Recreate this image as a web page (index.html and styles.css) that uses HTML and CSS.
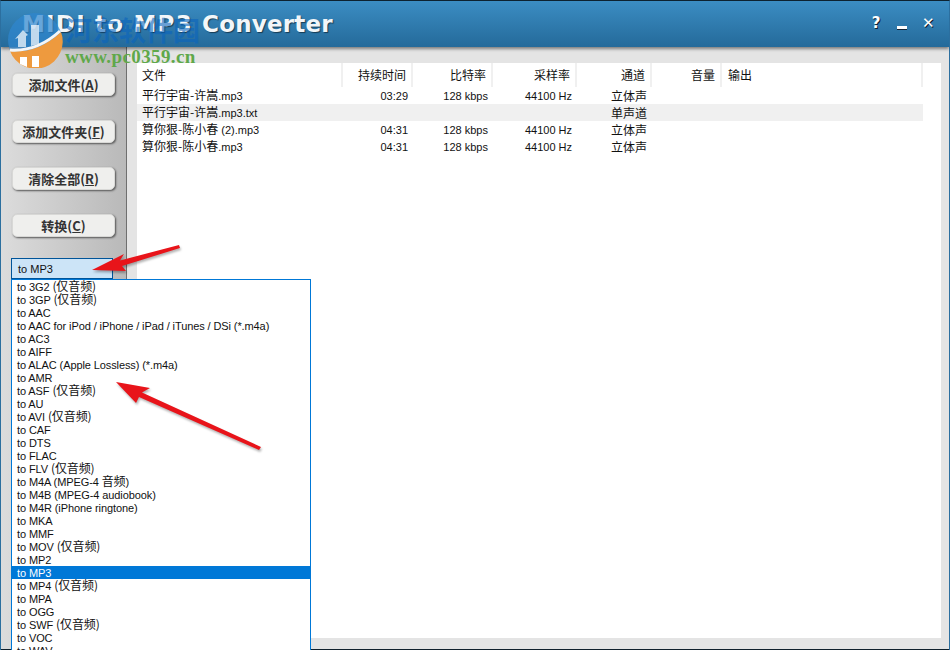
FILE: index.html
```html
<!DOCTYPE html>
<html lang="zh">
<head>
    <meta charset="UTF-8">
    <meta name="viewport" content="width=device-width, initial-scale=1.0">
    <title>MIDI to MP3 Converter</title>
    <link rel="stylesheet" href="styles.css">
</head>
<body>
    <div class="window">
        <!-- 标题栏 -->
        <div class="titlebar">
            <h1 class="app-title">MIDI to MP3 <span class="title-end">Converter</span></h1>
            <div class="win-buttons">
                <span class="win-btn">?</span>
                <span class="win-min"></span>
                <span class="win-btn">✕</span>
            </div>
        </div>

        <div class="content">
            <!-- 左侧按钮 -->
            <div class="sidebar">
                <button class="side-btn">添加文件(<u>A</u>)</button>
                <button class="side-btn">添加文件夹(<u>F</u>)</button>
                <button class="side-btn">清除全部(<u>R</u>)</button>
                <button class="side-btn">转换(<u>C</u>)</button>
            </div>

            <!-- 文件列表 -->
            <div class="main">
                <table class="file-table">
                    <thead>
                        <tr>
                            <th class="col-file cn">文件</th>
                            <th class="col-time num cn">持续时间</th>
                            <th class="col-rate num cn">比特率</th>
                            <th class="col-sample num cn">采样率</th>
                            <th class="col-channel num cn">通道</th>
                            <th class="col-volume num cn">音量</th>
                            <th class="col-output cn">输出</th>
                        </tr>
                    </thead>
                    <tbody>
                        <tr>
                            <td><span class="cn">平行宇宙-许嵩</span>.mp3</td>
                            <td class="num">03:29</td>
                            <td class="num">128 kbps</td>
                            <td class="num">44100 Hz</td>
                            <td class="num cn">立体声</td>
                            <td></td>
                            <td></td>
                        </tr>
                        <tr class="alt">
                            <td><span class="cn">平行宇宙-许嵩</span>.mp3.txt</td>
                            <td></td>
                            <td></td>
                            <td></td>
                            <td class="num cn">单声道</td>
                            <td></td>
                            <td></td>
                        </tr>
                        <tr>
                            <td><span class="cn">算你狠-陈小春</span> (2).mp3</td>
                            <td class="num">04:31</td>
                            <td class="num">128 kbps</td>
                            <td class="num">44100 Hz</td>
                            <td class="num cn">立体声</td>
                            <td></td>
                            <td></td>
                        </tr>
                        <tr>
                            <td><span class="cn">算你狠-陈小春</span>.mp3</td>
                            <td class="num">04:31</td>
                            <td class="num">128 kbps</td>
                            <td class="num">44100 Hz</td>
                            <td class="num cn">立体声</td>
                            <td></td>
                            <td></td>
                        </tr>
                    </tbody>
                </table>
            </div>
        </div>

        <!-- 格式下拉框 -->
        <div class="combo">to MP3</div>
        <ul class="format-list">
            <li>to 3G2 <span class="cn">(仅音频)</span></li>
            <li>to 3GP <span class="cn">(仅音频)</span></li>
            <li>to AAC</li>
            <li>to AAC for iPod / iPhone / iPad / iTunes / DSi (*.m4a)</li>
            <li>to AC3</li>
            <li>to AIFF</li>
            <li>to ALAC (Apple Lossless) (*.m4a)</li>
            <li>to AMR</li>
            <li>to ASF <span class="cn">(仅音频)</span></li>
            <li>to AU</li>
            <li>to AVI <span class="cn">(仅音频)</span></li>
            <li>to CAF</li>
            <li>to DTS</li>
            <li>to FLAC</li>
            <li>to FLV <span class="cn">(仅音频)</span></li>
            <li>to M4A (MPEG-4 <span class="cn">音频</span>)</li>
            <li>to M4B (MPEG-4 audiobook)</li>
            <li>to M4R (iPhone ringtone)</li>
            <li>to MKA</li>
            <li>to MMF</li>
            <li>to MOV <span class="cn">(仅音频)</span></li>
            <li>to MP2</li>
            <li class="selected">to MP3</li>
            <li>to MP4 <span class="cn">(仅音频)</span></li>
            <li>to MPA</li>
            <li>to OGG</li>
            <li>to SWF <span class="cn">(仅音频)</span></li>
            <li>to VOC</li>
            <li>to WAV</li>
        </ul>

        <!-- 红色箭头 -->
        <svg class="arrows" width="950" height="650" viewBox="0 0 950 650">
            <g fill="#e8141a">
                <path d="M92 270 L124 254 L120 260.500 L179 245 L180 248 L122 266 L126 271 Z"/>
                <path d="M116 382 L150 388 L142 392.500 L261 447 L259 450 L139 397 L136 403 Z"/>
            </g>
        </svg>

        <!-- 水印 -->
        <div class="watermark">
            <svg class="wm-logo" width="56" height="56" viewBox="0 0 56 56">
                <circle cx="28" cy="28" r="27" fill="#2f86cf" fill-opacity="0.72"/>
                <path d="M3 39 Q 30 42 54 20 A27 27 0 0 1 3 39 Z" fill="#ee9a3e"/>
                <path d="M3 38 Q 30 40 53 19" fill="none" stroke="#f4f6f8" stroke-width="3"/>
                <path d="M13 45 H20 V55 L13 52 Z M25 44 H32 V55 H25 Z" fill="#ffffff"/>
                <path d="M11 35 L11 26 L8 27 L16 18 L21 23 L19 24 L19 35 Z" fill="#ffffff" fill-opacity="0.7"/>
                <path d="M24 34 L24 13 L32 13 L32 32 Z" fill="#ffffff" fill-opacity="0.7"/>
            </svg>
            <div class="wm-name">河东软件园</div>
            <div class="wm-url">www.pc0359.cn</div>
        </div>
    </div>
</body>
</html>
```

FILE: styles.css
```css
html, body {
    margin: 0;
    padding: 0;
    height: 100%;
    overflow: hidden;
}
body {
    font-family: "Liberation Sans", "Noto Sans CJK SC", sans-serif;
    font-size: 11px;
    color: #111;
}
.cn {
    font-family: "Noto Sans CJK SC", sans-serif;
    font-size: 12px;
}
/* 中文不要撑高行 */
td span.cn, li span.cn {
    line-height: 0;
}
.window {
    position: relative;
    width: 950px;
    height: 650px;
    box-sizing: border-box;
    overflow: hidden;
    display: flex;
    flex-direction: column;
    border-top: 1px solid #0d2230;
    border-left: 1px solid #2c6f9f;
    border-right: 1px solid #2c6f9f;
    background-color: #e4e4e4;
}
/* 标题栏 */
.titlebar {
    height: 46px;
    flex: none;
    display: flex;
    align-items: center;
    justify-content: space-between;
    padding: 0 15px 0 21px;
    background: linear-gradient(#3b8dc3, #246a9a);
    box-shadow: 0 2px 3px rgba(0,0,0,0.45);
    position: relative;
    z-index: 1;
}
.app-title {
    margin: 0;
    color: #f2f6f9;
    font-family: "DejaVu Sans", sans-serif;
    font-size: 23px;
    font-weight: bold;
    letter-spacing: 1.2px;
    text-shadow: 1px 1px 1px rgba(0,0,0,0.5);
}
.title-end {
    letter-spacing: 0.2px;
}
.win-buttons {
    display: flex;
    align-items: center;
    gap: 15px;
    margin-top: -3px;
}
.win-btn {
    width: 12px;
    text-align: center;
    color: #fff;
    font-family: "DejaVu Sans", sans-serif;
    font-size: 15px;
    font-weight: bold;
    text-shadow: 1px 1px 0 #123;
}
.win-min {
    width: 10px;
    height: 3px;
    margin-top: 9px;
    background-color: #fff;
    box-shadow: 0 1px 0 #123;
}
.content {
    flex: 1;
    display: flex;
    min-height: 0;
    border-bottom: 1px solid #10202c;
}
/* 左侧按钮 */
.sidebar {
    width: 126px;
    flex: none;
    box-sizing: border-box;
    padding-top: 26px;
    padding-left: 11px;
    display: flex;
    flex-direction: column;
    gap: 24px;
    border-right: 1px solid #6f6f6f;
    background: linear-gradient(90deg, #dcdcdc, #b9b9b9);
}
.side-btn {
    width: 103px;
    height: 23px;
    padding: 0;
    border: 1px solid #d8d8d6;
    border-radius: 5px;
    background-color: #efefed;
    box-shadow: 1px 1px 2px #555;
    color: #333;
    font-family: "Noto Sans CJK SC", sans-serif;
    font-size: 13px;
    font-weight: bold;
}
/* 文件列表 */
.main {
    flex: 1;
    margin: 16px 8px 11px 10px;
    background-color: #fff;
}
.file-table {
    width: 786px;
    border-collapse: separate;
    border-spacing: 0;
    table-layout: fixed;
}
.file-table th {
    box-sizing: border-box;
    height: 24px;
    padding: 0 5px 2px;
    font-weight: normal;
    text-align: left;
    border-right: 2px solid #f0f0f0;
}
.file-table td {
    height: 17px;
    padding: 0 5px;
    white-space: nowrap;
    overflow: hidden;
}
.file-table .num {
    text-align: right;
}
.file-table .alt {
    background-color: #f0f0f0;
}
.col-file { width: 206px; }
.col-time { width: 70px; }
.col-rate { width: 80px; }
.col-sample { width: 84px; }
.col-channel { width: 75px; }
.col-volume { width: 70px; }
.file-table .col-output { padding-left: 6px; }
/* 下拉框 */
.combo {
    position: absolute;
    left: 10px;
    top: 257px;
    width: 94px;
    height: 19px;
    padding-left: 6px;
    line-height: 21px;
    background-color: #cce4f7;
    border: 1px solid #005499;
}
.format-list {
    position: absolute;
    left: 10px;
    top: 278px;
    width: 298px;
    margin: 0;
    padding: 0;
    list-style: none;
    background-color: #fff;
    border: 1px solid #0078d7;
}
.format-list li {
    height: 13px;
    line-height: 15px;
    padding-left: 5px;
    letter-spacing: -0.1px;
    white-space: nowrap;
}
.format-list .selected {
    background-color: #0078d7;
    color: #fff;
}
.arrows {
    position: absolute;
    left: -1px;
    top: -1px;
    filter: drop-shadow(1px 2px 1px rgba(0,0,0,0.3));
}
/* 水印 */
.watermark {
    position: absolute;
    left: 6px;
    top: 11px;
    width: 200px;
    height: 60px;
    z-index: 2;
}
.wm-logo {
    position: absolute;
    left: 0;
    top: 0;
}
.wm-name {
    position: absolute;
    left: 58px;
    top: 3px;
    color: rgba(10,100,190,0.6);
    font-family: "Noto Sans CJK SC", sans-serif;
    font-size: 27px;
    font-weight: bold;
    line-height: 30px;
    white-space: nowrap;
}
.wm-url {
    position: absolute;
    left: 58px;
    top: 34px;
    color: #5fa84a;
    font-family: "Liberation Serif", serif;
    font-size: 19px;
    font-weight: bold;
    letter-spacing: 0.4px;
    line-height: 22px;
    white-space: nowrap;
}
```
